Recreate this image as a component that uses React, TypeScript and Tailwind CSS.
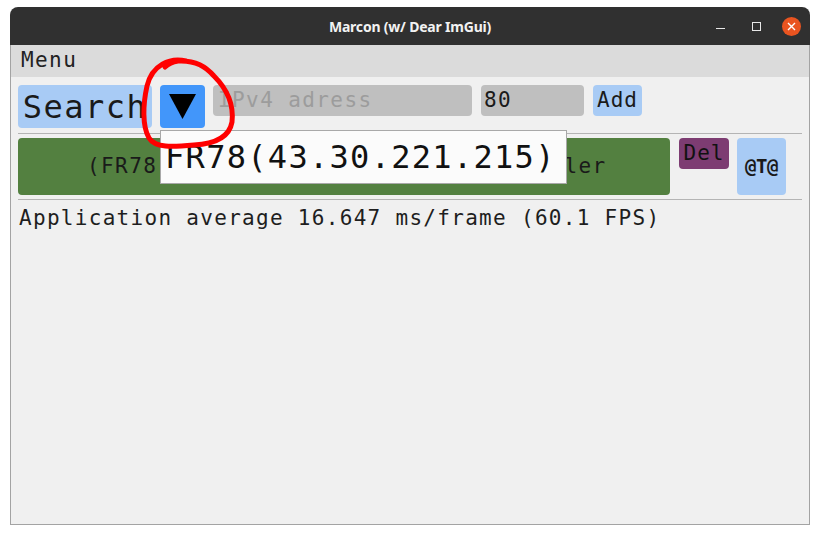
import React from 'react';

const mono = "font-['DejaVu_Sans_Mono',monospace]";

export default function App() {
  return (
    <div className="relative w-[820px] h-[535px] bg-white overflow-hidden">
      <div className="ml-[10px] mt-[7px] w-[800px] h-[518px] flex flex-col rounded-t-[8px] overflow-hidden">
        {/* title bar */}
        <div className="h-[38px] shrink-0 bg-[#303030] grid grid-cols-[1fr_auto_1fr] items-center">
          <div />
          <div className="font-['Noto_Sans',sans-serif] font-bold text-[14px] text-[#f2f2f2] tracking-[-0.2px]">
            Marcon (w/ Dear ImGui)
          </div>
          <div className="flex items-center justify-end pr-[9px]">
            <div className="w-[9px] h-[1px] bg-[#e8e8e8] mt-[4px]" />
            <div className="ml-[27px] w-[9px] h-[9px] border border-[#e8e8e8]" />
            <div className="ml-[21px] w-[19px] h-[19px] rounded-full bg-[#e95420] flex items-center justify-center">
              <svg width="9" height="9" viewBox="0 0 9 9">
                <path d="M1 1 L8 8 M8 1 L1 8" stroke="white" strokeWidth="1.4" />
              </svg>
            </div>
          </div>
        </div>

        {/* body */}
        <div className="flex-1 flex flex-col bg-[#f0f0f0] border-x border-b border-[#a3a3a3]">
          <div className={`h-[32px] bg-[#dbdbdb] pl-[10px] flex items-center ${mono} text-[21px] tracking-[1.4px] text-[#222]`}>
            Menu
          </div>

          <div className="px-[7px] pt-[8px] flex flex-col">
            {/* row 1 */}
            <div className={`flex items-start ${mono}`}>
              <div className="w-[134px] h-[43px] rounded-[4px] bg-[#a8cbf5] flex items-center justify-center text-[32px] tracking-[1.5px] text-[#1a1a1a]">
                Search
              </div>
              <div className="ml-[8px] w-[45px] h-[43px] rounded-[4px] bg-[#4296fa] flex items-center justify-center">
                <svg width="27" height="25" viewBox="0 0 27 25">
                  <path d="M0 0 H27 L13.5 25 Z" fill="black" />
                </svg>
              </div>
              <div className="ml-[8px] w-[259px] h-[31px] rounded-[4px] bg-[#bfbfbf] pl-[5px] leading-[31px] text-[21px] tracking-[1.4px] text-[#9c9c9c]">
                IPv4 adress
              </div>
              <div className="ml-[9px] w-[103px] h-[31px] rounded-[4px] bg-[#bfbfbf] pl-[3px] leading-[31px] text-[21px] tracking-[1.4px] text-[#1a1a1a]">
                80
              </div>
              <div className="ml-[9px] w-[49px] h-[31px] rounded-[4px] bg-[#a8cbf5] leading-[31px] text-center text-[21px] tracking-[1px] text-[#1a1a1a]">
                Add
              </div>
            </div>

            <div className="mt-[5px] h-[1px] bg-[#b4b4b4]" />

            {/* row 2 */}
            <div className={`mt-[4px] flex items-start ${mono}`}>
              <div className="w-[652px] h-[57px] rounded-[4px] bg-[#538040] pl-[69px] flex items-center whitespace-pre text-[21px] tracking-[1.4px] text-[#1a1a1a] overflow-hidden">
                (FR78) 43.30.221.215:80 -  Controller
              </div>
              <div className="ml-[9px] w-[50px] h-[31px] rounded-[4px] bg-[#7d3c72] leading-[31px] text-center text-[21px] tracking-[1px] text-[#111]">
                Del
              </div>
              <div className="ml-[8px] w-[49px] h-[57px] rounded-[4px] bg-[#a8cbf5] flex items-center justify-center text-[19px] font-bold tracking-[-0.5px] text-[#1a1a1a]">
                @T@
              </div>
            </div>

            <div className="mt-[4px] h-[1px] bg-[#b4b4b4]" />

            <div className={`pt-[5px] pl-[1px] leading-[26px] ${mono} text-[21px] tracking-[1.3px] text-[#1e1e1e]`}>
              Application average 16.647 ms/frame (60.1 FPS)
            </div>
          </div>
        </div>
      </div>

      {/* tooltip popup */}
      <div className={`absolute left-[160px] top-[130px] w-[407px] h-[54px] bg-[#fbfbfb] border border-[#a8a8a8] pl-[4px] flex items-center ${mono} text-[32px] tracking-[1.3px] text-[#111]`}>
        FR78(43.30.221.215)
      </div>

      {/* red annotation */}
      <svg className="absolute left-0 top-0 pointer-events-none" width="820" height="535">
        <path
          d="M186 61 C170 57, 152 65, 147 86 C143 104, 142 126, 149 138 C155 148, 172 147, 194 145 C213 144, 229 139, 232 122 C234 104, 226 88, 214 76 C206 67, 196 60, 178 61 C172 62, 168 64, 165 67"
          fill="none"
          stroke="#ff0000"
          strokeWidth="5"
          strokeLinecap="round"
          strokeLinejoin="round"
        />
      </svg>
    </div>
  );
}
